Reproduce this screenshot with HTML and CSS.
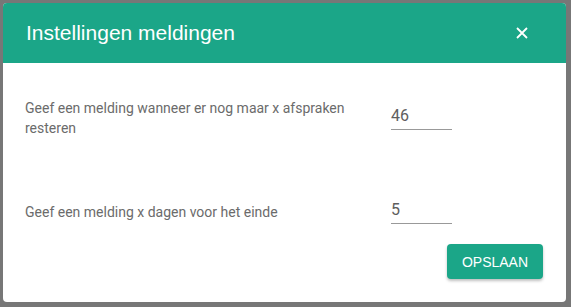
FILE: index.html
```html
<!DOCTYPE html>
<html lang="nl">
<head>
    <meta charset="UTF-8">
    <meta name="viewport" content="width=device-width, initial-scale=1.0">
    <title>Instellingen meldingen</title>
    <link rel="stylesheet" href="styles.css">
</head>
<body>
    <div class="dialog">
        <div class="dialog-header">
            <h1>Instellingen meldingen</h1>
            <button type="button" class="btn-close" aria-label="Sluiten">
                <svg width="12" height="12" viewBox="0 0 12 12">
                    <path d="M1 1 L11 11 M11 1 L1 11" stroke="white" stroke-width="1.8" fill="none"/>
                </svg>
            </button>
        </div>
        <form class="dialog-body" name="formMeldingen">
            <div class="rij">
                <label class="omschrijving">Geef een melding wanneer er nog maar x afspraken resteren</label>
                <input type="text" class="zone" name="afsprakenOver" value="46">
            </div>
            <div class="rij">
                <label class="omschrijving">Geef een melding x dagen voor het einde</label>
                <input type="text" class="zone" name="dagenVoorEinde" value="5">
            </div>
            <div class="buttons">
                <button type="submit" class="btn-opslaan">OPSLAAN</button>
            </div>
        </form>
    </div>
</body>
</html>
```

FILE: styles.css
```css
body {
    margin: 0;
    background: #777777;
    height: 307px;
    overflow: hidden;
    font-family: Roboto, Arial, sans-serif;
}

.dialog {
    margin: 3px;
    width: 563px;
    height: 299px;
    background: white;
    border-radius: 4px;
    overflow: hidden;
}

.dialog-header {
    height: 60px;
    background: #1ba688;
    display: flex;
    align-items: center;
    justify-content: space-between;
    padding: 0 38px 0 23px;
}

.dialog-header h1 {
    margin: 0;
    font-family: "Liberation Sans", Arial, sans-serif;
    font-weight: normal;
    font-size: 21px;
    color: white;
}

.btn-close {
    background: none;
    border: none;
    padding: 0;
    width: 12px;
    height: 12px;
    cursor: pointer;
    display: flex;
}

.dialog-body {
    padding: 35px 23px 0 22px;
}

.rij {
    display: flex;
    align-items: center;
    margin-bottom: 54px;
}

.rij + .rij {
    margin-bottom: 12px;
}

.omschrijving {
    width: 340px;
    margin-right: 26px;
    font-size: 14px;
    line-height: 20px;
    color: #6b6b6b;
}

.zone {
    width: 61px;
    height: 32px;
    box-sizing: border-box;
    margin-bottom: 8px;
    padding: 4px 0 0 0;
    border: none;
    border-bottom: 1px solid #999999;
    font-family: Roboto, Arial, sans-serif;
    font-size: 16px;
    color: #5e5e5e;
    outline: none;
}

.buttons {
    display: flex;
    justify-content: flex-end;
}

.btn-opslaan {
    width: 96px;
    height: 35px;
    border: none;
    border-radius: 4px;
    background: #1ba688;
    color: white;
    font-family: "Liberation Sans", Arial, sans-serif;
    font-size: 14px;
    box-shadow: 0 2px 3px rgba(0, 0, 0, 0.25);
    cursor: pointer;
}
```
